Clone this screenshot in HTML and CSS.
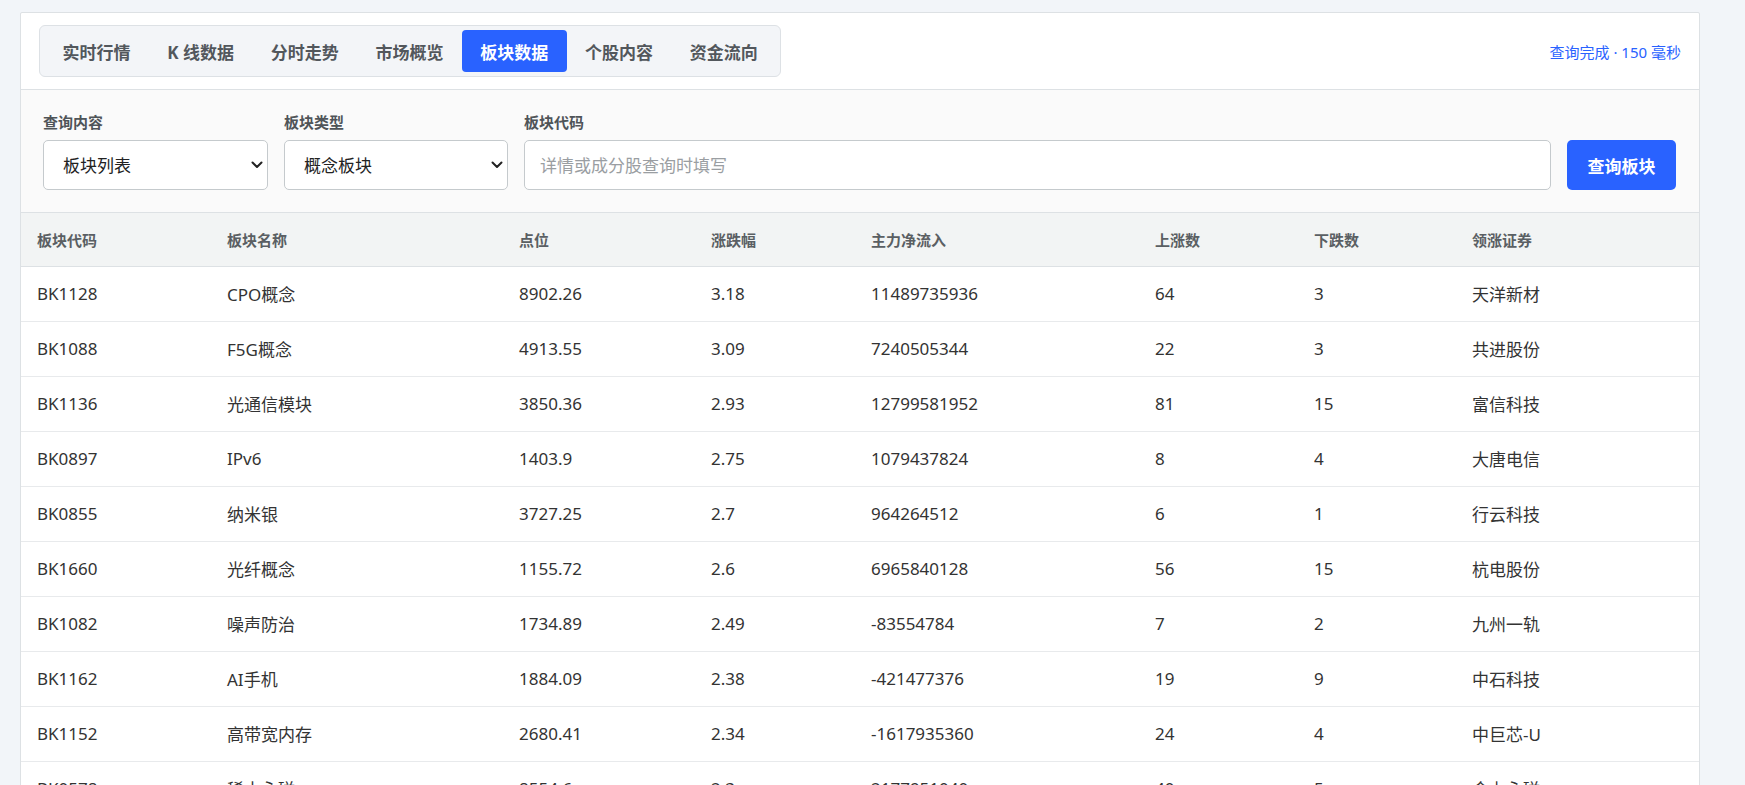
FILE: index.html
```html
<!DOCTYPE html>
<html lang="zh-CN">
<head>
    <meta charset="UTF-8">
    <meta name="viewport" content="width=device-width, initial-scale=1.0">
    <title>板块数据</title>
    <link rel="stylesheet" href="styles.css">
</head>
<body>
    <div class="panel">
        <div class="panel-header">
            <nav class="tabs">
                <a class="tab">实时行情</a>
                <a class="tab">K 线数据</a>
                <a class="tab">分时走势</a>
                <a class="tab">市场概览</a>
                <a class="tab active">板块数据</a>
                <a class="tab">个股内容</a>
                <a class="tab">资金流向</a>
            </nav>
            <span class="status">查询完成 · 150 毫秒</span>
        </div>

        <form class="query-form">
            <div class="field">
                <label>查询内容</label>
                <div class="select-wrap">
                    <select>
                        <option>板块列表</option>
                        <option>板块详情</option>
                        <option>成分股</option>
                    </select>
                    <svg class="chevron" viewBox="0 0 12 8" width="12" height="8"><path d="M1.5 1.5 6 6l4.5-4.5" fill="none" stroke="#222" stroke-width="2" stroke-linecap="round" stroke-linejoin="round"/></svg>
                </div>
            </div>
            <div class="field">
                <label>板块类型</label>
                <div class="select-wrap">
                    <select>
                        <option>概念板块</option>
                        <option>行业板块</option>
                        <option>地域板块</option>
                    </select>
                    <svg class="chevron" viewBox="0 0 12 8" width="12" height="8"><path d="M1.5 1.5 6 6l4.5-4.5" fill="none" stroke="#222" stroke-width="2" stroke-linecap="round" stroke-linejoin="round"/></svg>
                </div>
            </div>
            <div class="field">
                <label>板块代码</label>
                <input type="text" placeholder="详情或成分股查询时填写">
            </div>
            <button type="button" class="btn-query">查询板块</button>
        </form>

        <table class="data-table">
            <colgroup>
                <col style="width: 190px">
                <col style="width: 292px">
                <col style="width: 192px">
                <col style="width: 160px">
                <col style="width: 284px">
                <col style="width: 159px">
                <col style="width: 158px">
                <col>
            </colgroup>
            <thead>
                <tr>
                    <th>板块代码</th>
                    <th>板块名称</th>
                    <th>点位</th>
                    <th>涨跌幅</th>
                    <th>主力净流入</th>
                    <th>上涨数</th>
                    <th>下跌数</th>
                    <th>领涨证券</th>
                </tr>
            </thead>
            <tbody id="rows"></tbody>
        </table>
    </div>

    <script>
        const rows = [
            ['BK1128', 'CPO概念', '8902.26', '3.18', '11489735936', '64', '3', '天洋新材'],
            ['BK1088', 'F5G概念', '4913.55', '3.09', '7240505344', '22', '3', '共进股份'],
            ['BK1136', '光通信模块', '3850.36', '2.93', '12799581952', '81', '15', '富信科技'],
            ['BK0897', 'IPv6', '1403.9', '2.75', '1079437824', '8', '4', '大唐电信'],
            ['BK0855', '纳米银', '3727.25', '2.7', '964264512', '6', '1', '行云科技'],
            ['BK1660', '光纤概念', '1155.72', '2.6', '6965840128', '56', '15', '杭电股份'],
            ['BK1082', '噪声防治', '1734.89', '2.49', '-83554784', '7', '2', '九州一轨'],
            ['BK1162', 'AI手机', '1884.09', '2.38', '-421477376', '19', '9', '中石科技'],
            ['BK1152', '高带宽内存', '2680.41', '2.34', '-1617935360', '24', '4', '中巨芯-U'],
            ['BK0578', '稀土永磁', '8554.6', '2.3', '2177951040', '40', '5', '金力永磁']
        ];

        const tbody = document.getElementById('rows');
        rows.forEach(r => {
            const tr = document.createElement('tr');
            r.forEach(v => {
                const td = document.createElement('td');
                td.textContent = v;
                tr.appendChild(td);
            });
            tbody.appendChild(tr);
        });
    </script>
</body>
</html>
```

FILE: styles.css
```css
* {
    margin: 0;
    padding: 0;
    box-sizing: border-box;
}

body {
    font-family: "Noto Sans", "Noto Sans CJK SC", sans-serif;
    background: #f2f5f9;
    color: #333;
    padding: 12px 20px;
}

.panel {
    max-width: 1680px;
    background: #fff;
    border: 1px solid #dde1e4;
    border-radius: 2px;
}

.panel-header {
    display: flex;
    align-items: center;
    justify-content: space-between;
    padding: 12px 18px;
    border-bottom: 1px solid #dde1e4;
}

.tabs {
    display: flex;
    padding: 4px;
    background: #f3f5f8;
    border: 1px solid #dde1e5;
    border-radius: 6px;
}

.tab {
    display: flex;
    align-items: center;
    height: 42px;
    padding: 0 18.4px;
    font-size: 17px;
    font-weight: bold;
    color: #52575c;
    border-radius: 4px;
    cursor: pointer;
    white-space: nowrap;
}

.tab.active {
    background: #2962ff;
    color: #fff;
}

.status {
    font-size: 15px;
    color: #2962ff;
}

.query-form {
    display: grid;
    grid-template-columns: 225px 224px 1fr 109px;
    gap: 16px;
    align-items: end;
    padding: 22px 23px 22px 22px;
    background: #fafafa;
    border-bottom: 1px solid #dde1e4;
}

.field label {
    display: block;
    font-size: 15px;
    font-weight: bold;
    color: #4f5458;
    line-height: 20px;
    margin-bottom: 8px;
}

.select-wrap {
    position: relative;
}

select,
input {
    width: 100%;
    height: 50px;
    font-family: inherit;
    font-size: 17px;
    color: #222;
    background: #fff;
    border: 1px solid #c5cacd;
    border-radius: 5px;
    outline: none;
}

select {
    appearance: none;
    -webkit-appearance: none;
    padding: 0 30px 0 19px;
}

.chevron {
    position: absolute;
    right: 5px;
    top: 21px;
    pointer-events: none;
}

input {
    padding: 0 15px;
}

input::placeholder {
    color: #9a9ea2;
}

.btn-query {
    height: 50px;
    font-family: inherit;
    font-size: 17px;
    font-weight: bold;
    color: #fff;
    background: #2962ff;
    border: none;
    border-radius: 5px;
    cursor: pointer;
}

.data-table {
    width: 100%;
    border-collapse: collapse;
    table-layout: fixed;
}

.data-table th {
    height: 53px;
    padding: 0 16px;
    text-align: left;
    font-size: 15px;
    font-weight: bold;
    color: #5a5f63;
    background: #f2f4f4;
    border-bottom: 1px solid #dde1e4;
}

.data-table td {
    height: 55px;
    padding: 0 16px;
    font-size: 17px;
    color: #333;
    border-bottom: 1px solid #e8eaec;
    white-space: nowrap;
}
```
